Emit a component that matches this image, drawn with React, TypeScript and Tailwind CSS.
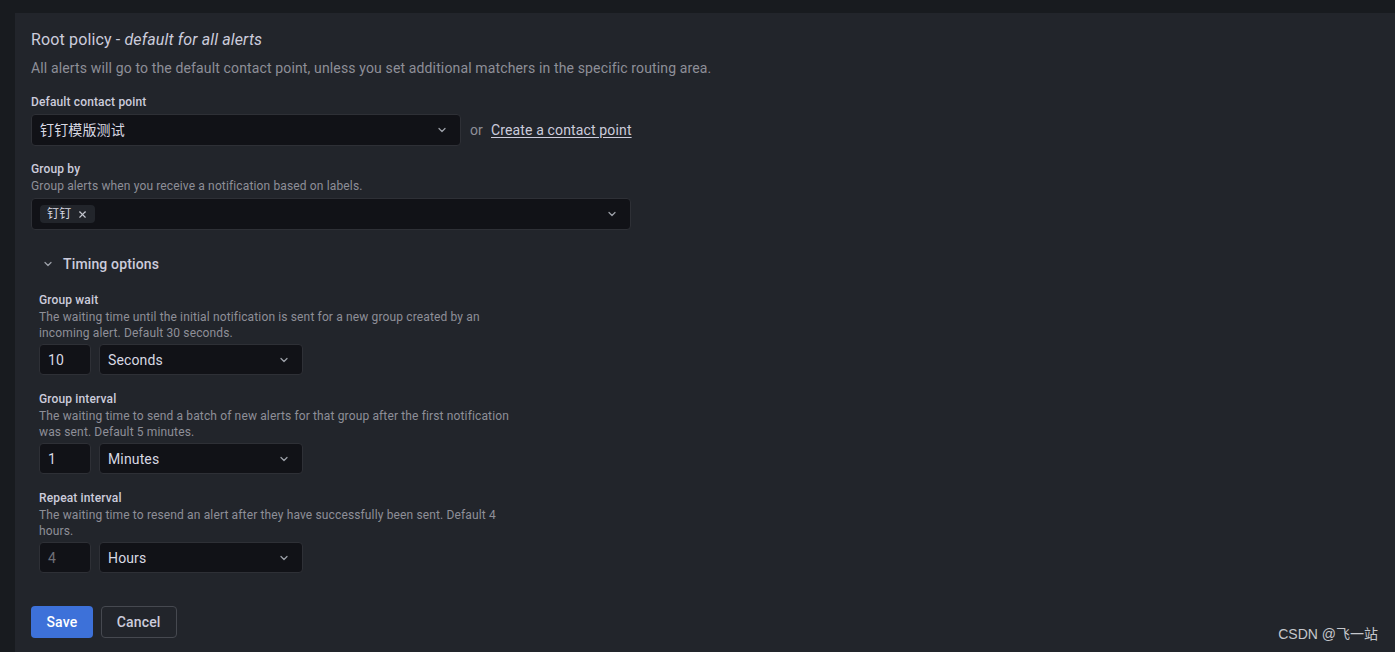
import { ChevronDown, X } from 'lucide-react';

const FONT = { fontFamily: 'Roboto, "Noto Sans CJK SC", sans-serif' };

function Chevron() {
  return <ChevronDown className="w-3 h-3 text-[#9ca0a8]" strokeWidth={2.5} />;
}

// Number box + unit select row used by the timing fields
function TimingField({
  label,
  description,
  value,
  unit,
  placeholder,
}: {
  label: string;
  description: string;
  value: string;
  unit: string;
  placeholder?: boolean;
}) {
  return (
    <div className="flex flex-col">
      <div className="text-xs font-medium leading-4 text-[#ccccdc]">{label}</div>
      <div className="w-[480px] text-xs leading-[15.5px] text-[#8e8f98] mt-[2px]">{description}</div>
      <div className="flex items-center gap-2 mt-[3px]">
        <div
          className={`w-[52px] h-[31px] flex items-center px-2 bg-[#111217] border border-[#2e3036] rounded-sm text-sm ${
            placeholder ? 'text-[#6e6f78]' : 'text-[#d8d9e3]'
          }`}
        >
          {value}
        </div>
        <div className="w-[204px] h-[31px] flex items-center justify-between pl-2 pr-3 bg-[#111217] border border-[#2e3036] rounded-sm text-sm text-[#d8d9e3]">
          <span>{unit}</span>
          <Chevron />
        </div>
      </div>
    </div>
  );
}

export default function App() {
  return (
    <div className="relative w-full h-[652px] overflow-hidden bg-[#181b1f] tracking-[0.14px]" style={FONT}>
      <div className="ml-[15px] mt-[13px] h-full bg-[#22252b] pl-4 pt-[15px] flex flex-col items-start">
        <h4 className="text-base leading-6 text-[#ccccdc]">
          Root policy - <em>default for all alerts</em>
        </h4>
        <p className="text-sm leading-5 text-[#8e8f98] mt-[6px]">
          All alerts will go to the default contact point, unless you set additional matchers in the specific routing area.
        </p>

        <div className="text-xs font-medium leading-4 text-[#ccccdc] mt-[16px]">Default contact point</div>
        <div className="flex items-center mt-[4px]">
          <div className="w-[430px] h-8 flex items-center justify-between pl-2 pr-3 bg-[#111217] border border-[#2e3036] rounded-sm text-sm text-[#d8d9e3]">
            <span>钉钉模版测试</span>
            <Chevron />
          </div>
          <span className="ml-[9px] text-sm text-[#8e8f98]">or</span>
          <a className="ml-[8px] text-sm text-[#ccccdc] underline underline-offset-2">Create a contact point</a>
        </div>

        <div className="text-xs font-medium leading-4 text-[#ccccdc] mt-[15px]">Group by</div>
        <div className="text-xs leading-4 text-[#8e8f98] mt-px">Group alerts when you receive a notification based on labels.</div>
        <div className="w-[600px] h-8 mt-[4px] flex items-center justify-between pl-2 pr-3 bg-[#111217] border border-[#2e3036] rounded-sm">
          <span className="flex items-center gap-[6px] h-[18px] px-[7px] rounded-sm bg-[#22252b] text-xs text-[#d8d9e3]">
            钉钉
            <X className="w-[11px] h-[11px] text-[#c4c6cf]" strokeWidth={2.5} />
          </span>
          <Chevron />
        </div>

        <div className="flex items-center mt-6 ml-[11px] h-5">
          <Chevron />
          <span className="ml-[9px] text-sm font-medium text-[#ccccdc]">Timing options</span>
        </div>

        <div className="ml-2 mt-[18px] flex flex-col gap-[16px]">
          <TimingField
            label="Group wait"
            description="The waiting time until the initial notification is sent for a new group created by an incoming alert. Default 30 seconds."
            value="10"
            unit="Seconds"
          />
          <TimingField
            label="Group interval"
            description="The waiting time to send a batch of new alerts for that group after the first notification was sent. Default 5 minutes."
            value="1"
            unit="Minutes"
          />
          <TimingField
            label="Repeat interval"
            description="The waiting time to resend an alert after they have successfully been sent. Default 4 hours."
            value="4"
            unit="Hours"
            placeholder
          />
        </div>

        <div className="flex items-center gap-2 mt-[33px]">
          <button className="h-8 px-[15.5px] rounded-sm bg-[#3d71d9] text-sm font-medium text-white">Save</button>
          <button className="h-8 px-[15px] rounded-sm border border-[#464950] text-sm font-medium text-[#ccccdc]">Cancel</button>
        </div>
      </div>

      <div className="absolute right-[17px] bottom-[8px] text-sm tracking-normal text-[#c5c7cc]" style={{ fontFamily: '"Liberation Sans", "Noto Sans CJK SC", sans-serif' }}>
        CSDN @飞一站
      </div>
    </div>
  );
}
